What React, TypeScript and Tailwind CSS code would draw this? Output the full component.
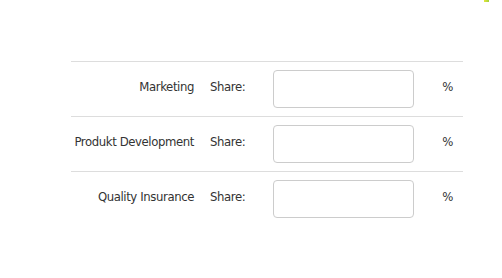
import React from 'react';

const rows = ['Marketing', 'Produkt Development', 'Quality Insurance'];

const App: React.FC = () => {
  return (
    <div
      className="relative w-[502px] h-[278px] bg-white text-[#333] text-[13px] tracking-[-0.4px]"
      style={{ fontFamily: '"DejaVu Sans Condensed", "Liberation Sans", sans-serif' }}
    >
      <div className="absolute top-0 left-[484px] w-[5px] h-[2px] bg-gradient-to-r from-[#e5e53a] to-[#9fd33c]" />
      <div className="pt-[61px] pl-[71px]">
        <div className="w-[392px]">
          {rows.map(label => (
            <div
              key={label}
              className="grid grid-cols-[131px_63px_156px_42px] items-center border-t border-[#dddddd]"
            >
              <div className="pr-2 pb-1 text-right whitespace-nowrap">{label}</div>
              <div className="px-2 pb-1 whitespace-nowrap">Share:</div>
              <div className="p-2">
                <input
                  type="text"
                  className="block w-[141px] h-[38px] border border-[#cccccc] rounded-[4px] bg-white"
                />
              </div>
              <div className="pr-[10px] pb-1 text-right">%</div>
            </div>
          ))}
        </div>
      </div>
    </div>
  );
};

export default App;
